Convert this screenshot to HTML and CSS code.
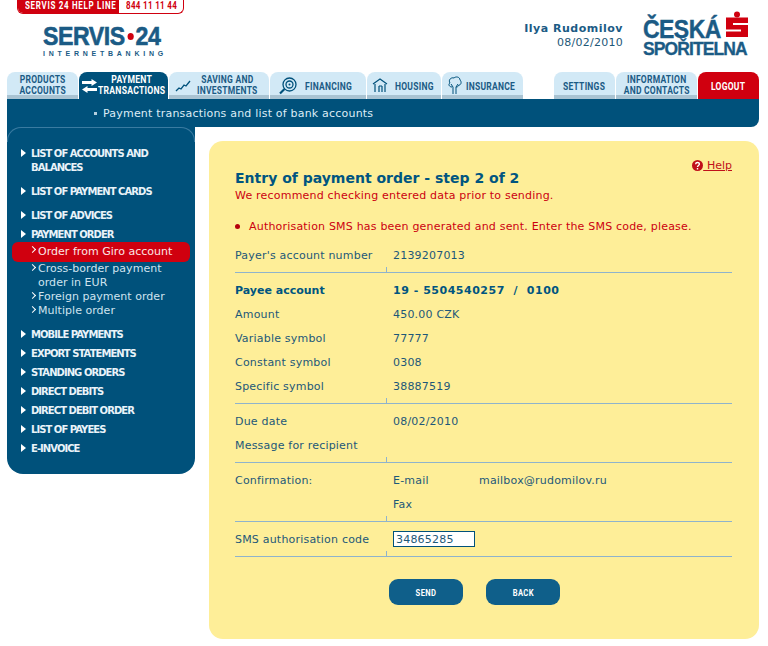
FILE: index.html
```html
<!DOCTYPE html>
<html lang="en">
<head>
<meta charset="utf-8">
<title>Servis 24 Internetbanking</title>
<link rel="stylesheet" href="styles.css">
</head>
<body>
<div class="page">
  <header class="top">
    <div class="brand">
      <div class="helpline"><span class="helpline-label"><b>SERVIS 24 HELP LINE</b></span><span class="helpline-phone"><b>844 11 11 44</b></span></div>
      <div class="servis"><span class="servis-name">SERVIS</span><i class="servis-dot"></i><span class="servis-name">24</span></div>
      <div class="servis-sub">INTERNETBANKING</div>
    </div>
    <div class="user">
      <strong>Ilya Rudomilov</strong>
      <span>08/02/2010</span>
    </div>
    <div class="bank">
      <div class="bank-text">
        <div class="bank-l1">ČESKÁ</div>
        <div class="bank-l2">SPOŘITELNA</div>
      </div>
      <svg class="bank-mark" width="22" height="26" viewBox="0 0 22 26"><circle cx="11" cy="3.5" r="3" fill="#d0000f"/><path d="M0 6.500H22V12H7V14H22V26H0V20.500H15V18.500H0Z" fill="#d0000f"/></svg>
    </div>
  </header>

  <nav class="tabs">
    <a class="tab w71"><span class="lbl">PRODUCTS<br>ACCOUNTS</span></a>
    <a class="tab w89 active">
      <svg class="ico" width="15" height="14" viewBox="0 0 15 14"><path d="M0 2h9.500V0L15 3.500 9.500 7V5H0zM15 9H5.500V7L0 10.500 5.500 14v-2H15z" fill="#fff"/></svg>
      <span class="lbl lbl-wide">PAYMENT<br>TRANSACTIONS</span></a>
    <a class="tab w100 t-saving">
      <svg class="ico" width="16" height="12" viewBox="0 0 16 12"><path d="M1 11l3-3 2 1 3-4 2 1 4-5" fill="none" stroke="#00517b" stroke-width="1.3"/></svg>
      <span class="lbl">SAVING AND<br>INVESTMENTS</span></a>
    <a class="tab w96 t-financing">
      <svg class="ico" width="18" height="18" viewBox="0 0 18 18"><circle cx="10.500" cy="7.500" r="6.500" fill="none" stroke="#00517b" stroke-width="1.300"/><circle cx="10.500" cy="7.500" r="3.500" fill="none" stroke="#00517b" stroke-width="1.300"/><circle cx="10.500" cy="7.500" r="1" fill="#00517b"/><path d="M5.500 12L1 16.500" stroke="#00517b" stroke-width="2.200"/></svg>
      <span class="lbl one">FINANCING</span></a>
    <a class="tab w74 t-housing">
      <svg class="ico" width="16" height="15" viewBox="0 0 16 15"><path d="M1 6L8 1l7 5M3 6v8M13 6v8M7 8v6M10 8v6M7 8h3" fill="none" stroke="#00517b" stroke-width="1.2"/></svg>
      <span class="lbl one">HOUSING</span></a>
    <a class="tab w81 t-insurance">
      <svg class="ico" width="14" height="19" viewBox="0 0 14 19"><path d="M4 11C1 11 0 8 2 7 0 4 3 1 6 2c2-2 6-1 6 2 2 2 1 5-1 5-1 2-2 2-3 2M5 18v-7L3 8M8 18v-7l2-3" fill="none" stroke="#00517b" stroke-width="1"/></svg>
      <span class="lbl one">INSURANCE</span></a>
    <a class="tab w61 push"><span class="lbl one">SETTINGS</span></a>
    <a class="tab w81"><span class="lbl">INFORMATION<br>AND CONTACTS</span></a>
    <a class="tab w61 logout"><span class="lbl one">LOGOUT</span></a>
  </nav>

  <div class="subbar"><i class="subbar-dot"></i><span>Payment transactions and list of bank accounts</span></div>

  <div class="content">
    <aside class="side">
      <ul class="menu">
        <li class="item">LIST OF ACCOUNTS AND BALANCES</li>
        <li class="item far">LIST OF PAYMENT CARDS</li>
        <li class="item far">LIST OF ADVICES</li>
        <li class="item">PAYMENT ORDER</li>
      </ul>
      <ul class="submenu">
        <li class="subitem current">Order from Giro account</li>
        <li class="subitem">Cross-border payment order in EUR</li>
        <li class="subitem">Foreign payment order</li>
        <li class="subitem">Multiple order</li>
      </ul>
      <ul class="menu">
        <li class="item far">MOBILE PAYMENTS</li>
        <li class="item">EXPORT STATEMENTS</li>
        <li class="item">STANDING ORDERS</li>
        <li class="item">DIRECT DEBITS</li>
        <li class="item">DIRECT DEBIT ORDER</li>
        <li class="item">LIST OF PAYEES</li>
        <li class="item">E-INVOICE</li>
      </ul>
    </aside>

    <main class="panel">
      <div class="panel-head">
        <div class="head-text">
          <h1>Entry of payment order - step 2 of 2</h1>
          <p class="note">We recommend checking entered data prior to sending.</p>
        </div>
        <a class="help"><svg width="11" height="11" viewBox="0 0 11 11"><circle cx="5.500" cy="5.500" r="5.500" fill="#c0101a"/><path d="M3.600 4.200C3.800 2 7.400 2 7.400 4c0 1.400-1.900 1.500-1.900 3M5.500 8v1.400" fill="none" stroke="#fff" stroke-width="1.400"/></svg><span class="help-text">&nbsp;Help</span></a>
      </div>
      <p class="alert"><i class="alert-dot"></i>Authorisation SMS has been generated and sent. Enter the SMS code, please.</p>

      <section class="group first">
        <div class="row"><span class="k">Payer's account number</span><span class="v">2139207013</span></div>
      </section>
      <section class="group">
        <div class="row strong"><span class="k">Payee account</span><span class="v">19 - 5504540257 &nbsp;/&nbsp; 0100</span></div>
        <div class="row"><span class="k">Amount</span><span class="v">450.00 CZK</span></div>
        <div class="row"><span class="k">Variable symbol</span><span class="v">77777</span></div>
        <div class="row"><span class="k">Constant symbol</span><span class="v">0308</span></div>
        <div class="row"><span class="k">Specific symbol</span><span class="v">38887519</span></div>
      </section>
      <section class="group">
        <div class="row"><span class="k">Due date</span><span class="v">08/02/2010</span></div>
        <div class="row"><span class="k">Message for recipient</span><span class="v"></span></div>
      </section>
      <section class="group">
        <div class="row"><span class="k">Confirmation:</span><span class="v v-narrow">E-mail</span><span class="v">mailbox@rudomilov.ru</span></div>
        <div class="row"><span class="k"></span><span class="v v-narrow">Fax</span></div>
      </section>
      <section class="group">
        <div class="row"><span class="k">SMS authorisation code</span><input class="code" type="text" value="34865285"></div>
      </section>
      <div class="actions">
        <a class="btn"><span class="btn-text">SEND</span></a>
        <a class="btn"><span class="btn-text">BACK</span></a>
      </div>
    </main>
  </div>
</div>
</body>
</html>
```

FILE: styles.css
```css
* { box-sizing: border-box; }
html, body { margin: 0; padding: 0; background: #fff; }
body { font-family: "DejaVu Sans", Verdana, sans-serif; font-size: 11px; letter-spacing: .2px; color: #1d5878; }
ul { list-style: none; margin: 0; padding: 0; }
p, h1 { margin: 0; }

.page { width: 768px; height: 646px; padding: 0 9px 0 7px; overflow: hidden; }

/* header */
.top { height: 72px; display: flex; align-items: flex-start; }
.brand { width: 516px; padding-left: 10px; }
.helpline { width: 167px; height: 14px; display: flex; border: 1px solid #d0000f; border-top: 0; border-radius: 0 0 6px 6px; overflow: hidden; font-family: Roboto, sans-serif; font-size: 10px; line-height: 12px; }
.helpline b { display: block; transform: scaleX(.8); transform-origin: 0 50%; white-space: nowrap; letter-spacing: .4px; }
.helpline-label b { letter-spacing: .85px; }
.helpline-label { width: 101px; background: #d0000f; color: #fff; padding-left: 7px; }
.helpline-phone { color: #d0000f; padding-left: 7px; }
.servis { margin: 12px 0 0 26px; height: 20px; display: flex; align-items: center; font-family: "Liberation Sans", sans-serif; font-weight: 700; font-size: 26px; line-height: 20px; color: #1b5b85; letter-spacing: -.5px; -webkit-text-stroke: .6px #1b5b85; transform: scaleX(.89); transform-origin: 0 50%; }
.servis-dot { width: 7px; height: 7px; margin: 0 2px 0 3px; border-radius: 50%; background: #d0000f; }
.servis-sub { margin: 4px 0 0 26px; font-family: "Liberation Sans", sans-serif; font-weight: 700; font-size: 7px; line-height: 7px; letter-spacing: 3.75px; color: #1b5b85; white-space: nowrap; }

.user { width: 100px; padding-top: 22px; display: flex; flex-direction: column; align-items: flex-end; line-height: 14px; white-space: nowrap; }
.user strong { color: #1b5b85; font-size: 11px; letter-spacing: .5px; }
.user span { color: #1d5878; letter-spacing: .25px; }

.bank { margin-left: 20px; padding-top: 11px; position: relative; color: #1b5b85; font-family: "Liberation Sans", sans-serif; font-weight: 700; white-space: nowrap; }
.bank-l1 { font-size: 25px; line-height: 24px; margin-top: 6px; letter-spacing: -.6px; -webkit-text-stroke: .4px #1b5b85; transform: scaleX(.92); transform-origin: 0 50%; }
.bank-l2 { font-size: 17.5px; line-height: 15px; margin-top: 1px; letter-spacing: -.9px; -webkit-text-stroke: .3px #1b5b85; }
.bank-mark { position: absolute; left: 83px; top: 11px; }

/* tabs */
.tabs { display: flex; gap: 1px; height: 27px; }
.tab { height: 27px; display: flex; align-items: center; justify-content: center; background: linear-gradient(#d2e9f6 0, #d2e9f6 23px, #a9c3d2 23px, #a9c3d2 27px); border-radius: 8px 8px 0 0; color: #1b5b85; }
.lbl { display: block; font-family: Roboto, sans-serif; font-weight: 700; font-size: 10.5px; line-height: 10.5px; text-align: center; white-space: nowrap; letter-spacing: .3px; transform: scaleX(.81); margin: 0 -10px; }
.one { margin-top: 3px; }
.w71 { width: 71px; } .w89 { width: 89px; } .w100 { width: 100px; } .w96 { width: 96px; }
.w74 { width: 74px; } .w81 { width: 81px; } .w61 { width: 61px; }
.push { margin-left: 30px; }
.active { background: #00517b; color: #fff; justify-content: flex-start; gap: 1px; padding-left: 3px; }
.lbl-wide { transform: scaleX(.82); transform-origin: 0 50%; margin: 0 -20px 0 0; }
.t-saving, .t-financing, .t-housing, .t-insurance { justify-content: flex-start; }
.t-saving .lbl, .t-financing .lbl, .t-housing .lbl, .t-insurance .lbl { transform-origin: 0 50%; margin-left: 0; margin-right: -20px; }
.t-saving { padding-left: 6px; gap: 6px; }
.t-financing { padding-left: 9px; gap: 8px; }
.t-housing { padding-left: 5px; gap: 7px; }
.t-insurance { padding-left: 6px; gap: 4px; }
.logout { background: #d0000f; color: #fff; }
.ico { flex: none; }

.subbar { height: 28px; background: #00517b; border-radius: 0 0 8px 0; display: flex; align-items: center; padding-left: 87px; color: #dcecf6; white-space: nowrap; }
.subbar-dot { width: 3px; height: 3px; background: #b5cfdf; margin-right: 6px; }

/* layout */
.content { display: flex; gap: 14px; align-items: flex-start; }

/* sidebar */
.side { position: relative; width: 188px; height: 347px; padding: 19px 0 0 0; background: #00517b; border-radius: 0 0 16px 16px; }
.side::before { content: ""; position: absolute; left: 0; right: 0; top: 0; height: 14px; border: 1px solid #3a7ba1; border-width: 1px 1px 0; border-radius: 14px 14px 0 0; }
.item { position: relative; padding: 1px 0 0 24px; margin-top: 4px; font-weight: 700; font-size: 10px; line-height: 14px; letter-spacing: -.95px; color: #e9f3f9; width: 165px; }
.item::before { content: ""; position: absolute; left: 14px; top: 3px; border-left: 5px solid #fff; border-top: 4px solid transparent; border-bottom: 4px solid transparent; }
.menu .item:first-child:not(.far) { margin-top: 0; }
.item.far { margin-top: 9px; }
.subitem { position: relative; padding: 0 0 0 31px; margin: 0 20px 0 0; line-height: 14px; letter-spacing: .03px; color: #cfe3ef; }
.subitem::before { content: ""; position: absolute; left: 23px; top: 3px; width: 4px; height: 4px; border: solid #fff; border-width: 1px 1px 0 0; transform: rotate(45deg); }
.subitem.current { margin: 0 5px; padding: 3px 0 3px 26px; height: 20px; background: #d0000f; border-radius: 6px; color: #fbe6e6; }
.subitem.current::before { left: 18px; top: 5px; }

/* main panel */
.panel { width: 550px; height: 498px; margin-top: 14px; padding: 17px 27px 0 26px; background: #feee98; border-radius: 14px; }
.panel-head { display: flex; justify-content: space-between; align-items: flex-start; }
.head-text { padding-top: 11px; }
h1 { font-size: 14px; line-height: 18px; font-weight: 700; letter-spacing: 0; color: #005580; white-space: nowrap; }
.note { margin-top: 2px; line-height: 14px; color: #cc0010; white-space: nowrap; }
.help { display: flex; align-items: center; height: 14px; color: #c0101a; letter-spacing: 0; text-decoration: underline; white-space: nowrap; }
.help-text { text-decoration: underline; }
.alert { display: flex; align-items: center; margin-top: 16px; height: 14px; color: #cc0010; white-space: nowrap; }
.alert-dot { width: 5px; height: 5px; margin-right: 9px; border-radius: 50%; background: #b5000c; }

.group { position: relative; padding: 5px 0; border-bottom: 1px solid #8fb3cc; }
.group.first { margin-top: 10px; padding-top: 0; }
.group::after { content: ""; position: absolute; left: 151px; bottom: 0; width: 1px; height: 5px; background: #8fb3cc; }
.row { display: flex; align-items: center; height: 24px; white-space: nowrap; }
.k { width: 158px; flex: none; }
.v-narrow { width: 86px; flex: none; }
.strong { font-weight: 700; color: #005580; }
.strong .k { letter-spacing: 0; }
.strong .v { letter-spacing: .52px; }
.code { width: 82px; height: 16px; padding: 1px 2px 0; border: 1px solid #00517b; outline: .5px solid #00517b; outline-offset: -1px; background: #fff; border-radius: 0; color: #1d5878; letter-spacing: .2px; font: 11px "DejaVu Sans", sans-serif; }

.actions { display: flex; gap: 23px; margin: 22px 0 0 154px; }
.btn { width: 74px; height: 26px; display: flex; align-items: center; justify-content: center; background: #0f5f8a; border-radius: 9px; color: #fff; }
.btn-text { display: block; font-family: Roboto, sans-serif; font-weight: 700; font-size: 9.5px; letter-spacing: .5px; transform: scaleX(.8); }
```
